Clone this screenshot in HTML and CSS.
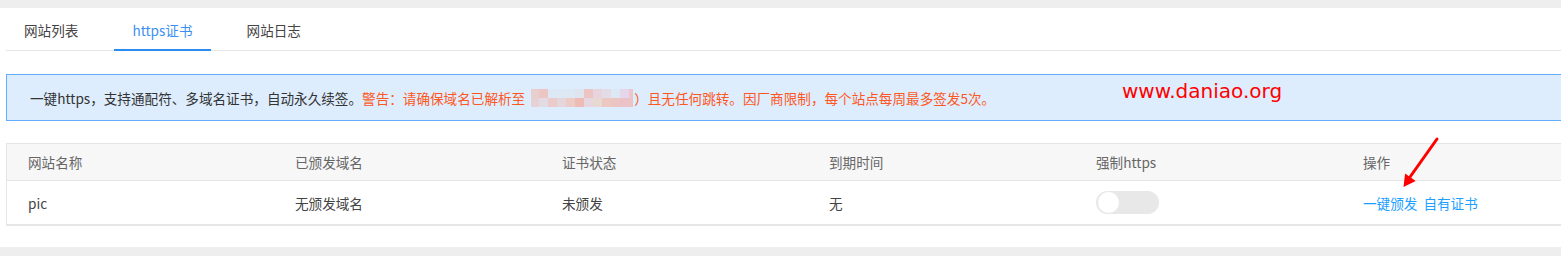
FILE: index.html
```html
<!DOCTYPE html>
<html lang="zh-CN">
<head>
<meta charset="utf-8">
<title>https证书</title>
<link rel="stylesheet" href="styles.css">
</head>
<body>
<div class="page">
  <ul class="tabs">
    <li class="tab">网站列表</li>
    <li class="tab active">https证书</li>
    <li class="tab">网站日志</li>
  </ul>

  <div class="alert">
    <span>一键https，支持通配符、多域名证书，自动永久续签。</span><span class="warn">警告：请确保域名已解析至</span><svg class="mosaic" width="102" height="18" viewBox="0 0 102 18">
      <rect x="0" y="0" width="8" height="9" fill="#e8cfcf"/>
      <rect x="8" y="0" width="9" height="9" fill="#ecc6c4"/>
      <rect x="17" y="0" width="9" height="9" fill="#dde8f5"/>
      <rect x="26" y="0" width="9" height="9" fill="#dde8f5"/>
      <rect x="35" y="0" width="9" height="9" fill="#dde8f5"/>
      <rect x="44" y="0" width="9" height="9" fill="#e0e4ee"/>
      <rect x="53" y="0" width="9" height="9" fill="#ecc5c2"/>
      <rect x="62" y="0" width="9" height="9" fill="#e7d4df"/>
      <rect x="71" y="0" width="9" height="9" fill="#e2dce6"/>
      <rect x="80" y="0" width="9" height="9" fill="#dde8f5"/>
      <rect x="89" y="0" width="9" height="9" fill="#e6d6ec"/>
      <rect x="98" y="0" width="4" height="9" fill="#ecc6cc"/>
      <rect x="0" y="9" width="8" height="9" fill="#e6d2d4"/>
      <rect x="8" y="9" width="9" height="9" fill="#e3dbe4"/>
      <rect x="17" y="9" width="9" height="9" fill="#ebcaca"/>
      <rect x="26" y="9" width="9" height="9" fill="#e5d6dc"/>
      <rect x="35" y="9" width="9" height="9" fill="#eccac6"/>
      <rect x="44" y="9" width="9" height="9" fill="#edbcb5"/>
      <rect x="53" y="9" width="9" height="9" fill="#e6d6e0"/>
      <rect x="62" y="9" width="9" height="9" fill="#e8d8d2"/>
      <rect x="71" y="9" width="9" height="9" fill="#ebc8c4"/>
      <rect x="80" y="9" width="9" height="9" fill="#ecc4c2"/>
      <rect x="89" y="9" width="9" height="9" fill="#ecc2c8"/>
      <rect x="98" y="9" width="4" height="9" fill="#ecc4c8"/>
    </svg><span class="warn">）且无任何跳转。因厂商限制，每个站点每周最多签发5次。</span>
    <span class="watermark">www.daniao.org</span>
  </div>

  <table class="grid">
    <colgroup>
      <col class="c">
      <col class="c">
      <col class="c">
      <col class="c">
      <col class="c">
      <col>
    </colgroup>
    <thead>
      <tr>
        <th>网站名称</th>
        <th>已颁发域名</th>
        <th>证书状态</th>
        <th>到期时间</th>
        <th>强制https</th>
        <th>操作</th>
      </tr>
    </thead>
    <tbody>
      <tr>
        <td>pic</td>
        <td>无颁发域名</td>
        <td>未颁发</td>
        <td>无</td>
        <td><span class="switch"><span class="knob"></span></span></td>
        <td><a class="link">一键颁发</a><a class="link">自有证书</a></td>
      </tr>
    </tbody>
  </table>

  <svg class="arrow" width="50" height="65" viewBox="0 0 50 65">
    <line x1="42" y1="9" x2="15" y2="47" stroke="#ff0000" stroke-width="3" stroke-linecap="round"/>
    <polygon points="8.5,57 20.7,50.9 10.1,43.5" fill="#ff0000"/>
  </svg>
</div>
</body>
</html>
```

FILE: styles.css
```css
html, body {
  margin: 0;
  padding: 0;
  background: #eeeeee;
  overflow: hidden;
}

body {
  font-family: "Noto Sans CJK SC", "Noto Sans", sans-serif;
  font-size: 13.6px;
  color: #333;
}

.page {
  position: relative;
  margin-top: 8px;
  height: 239px;
  padding-left: 6px;
  box-sizing: border-box;
  background: #fff;
}

.tabs {
  display: flex;
  align-items: flex-start;
  gap: 18px;
  margin: 0;
  padding: 0;
  list-style: none;
  height: 42px;
  border-bottom: 1px solid #e6e6e6;
}

.tab {
  box-sizing: border-box;
  height: 43px;
  padding: 3px 18px 0;
  line-height: 38px;
  color: #444;
  border-bottom: 2px solid transparent;
  white-space: nowrap;
}

.tab.active {
  color: #3b8ff0;
  border-bottom-color: #2d8cf0;
}

.alert {
  position: relative;
  box-sizing: border-box;
  margin-top: 23px;
  height: 47px;
  display: flex;
  align-items: center;
  padding-left: 23px;
  background: #ddedfd;
  border: 1px solid #62adff;
  border-right: 0;
  white-space: nowrap;
  color: #333;
}

.warn {
  color: #ff5722;
}

.mosaic {
  display: block;
  margin: 0 1px 0 6px;
}

.watermark {
  position: absolute;
  left: 1115px;
  top: 4px;
  font-family: "DejaVu Sans", sans-serif;
  font-size: 20px;
  color: #ff0000;
}

.grid {
  margin-top: 22px;
  border-spacing: 0;
  table-layout: fixed;
  width: 100%;
  border-left: 1px solid #e6e6e6;
  border-top: 1px solid #e6e6e6;
}

.grid .c {
  width: 267px;
}

.grid th,
.grid td {
  box-sizing: border-box;
  padding: 0 0 0 21px;
  text-align: left;
  font-weight: normal;
  vertical-align: middle;
  white-space: nowrap;
}

.grid th {
  height: 37px;
  background: #f7f7f7;
  color: #666;
  border-bottom: 1px solid #e6e6e6;
}

.grid td {
  height: 45px;
  color: #444;
  border-bottom: 2px solid #e6e6e6;
}

.switch {
  position: relative;
  display: block;
  width: 63px;
  height: 23px;
  border-radius: 12px;
  background: #e8e8e8;
}

.knob {
  position: absolute;
  left: 2px;
  top: 1px;
  width: 21px;
  height: 21px;
  border-radius: 50%;
  background: #fff;
}

.link {
  color: #1e9fff;
  margin-right: 6px;
  cursor: pointer;
}

.arrow {
  position: absolute;
  left: 1395px;
  top: 122px;
}
```
